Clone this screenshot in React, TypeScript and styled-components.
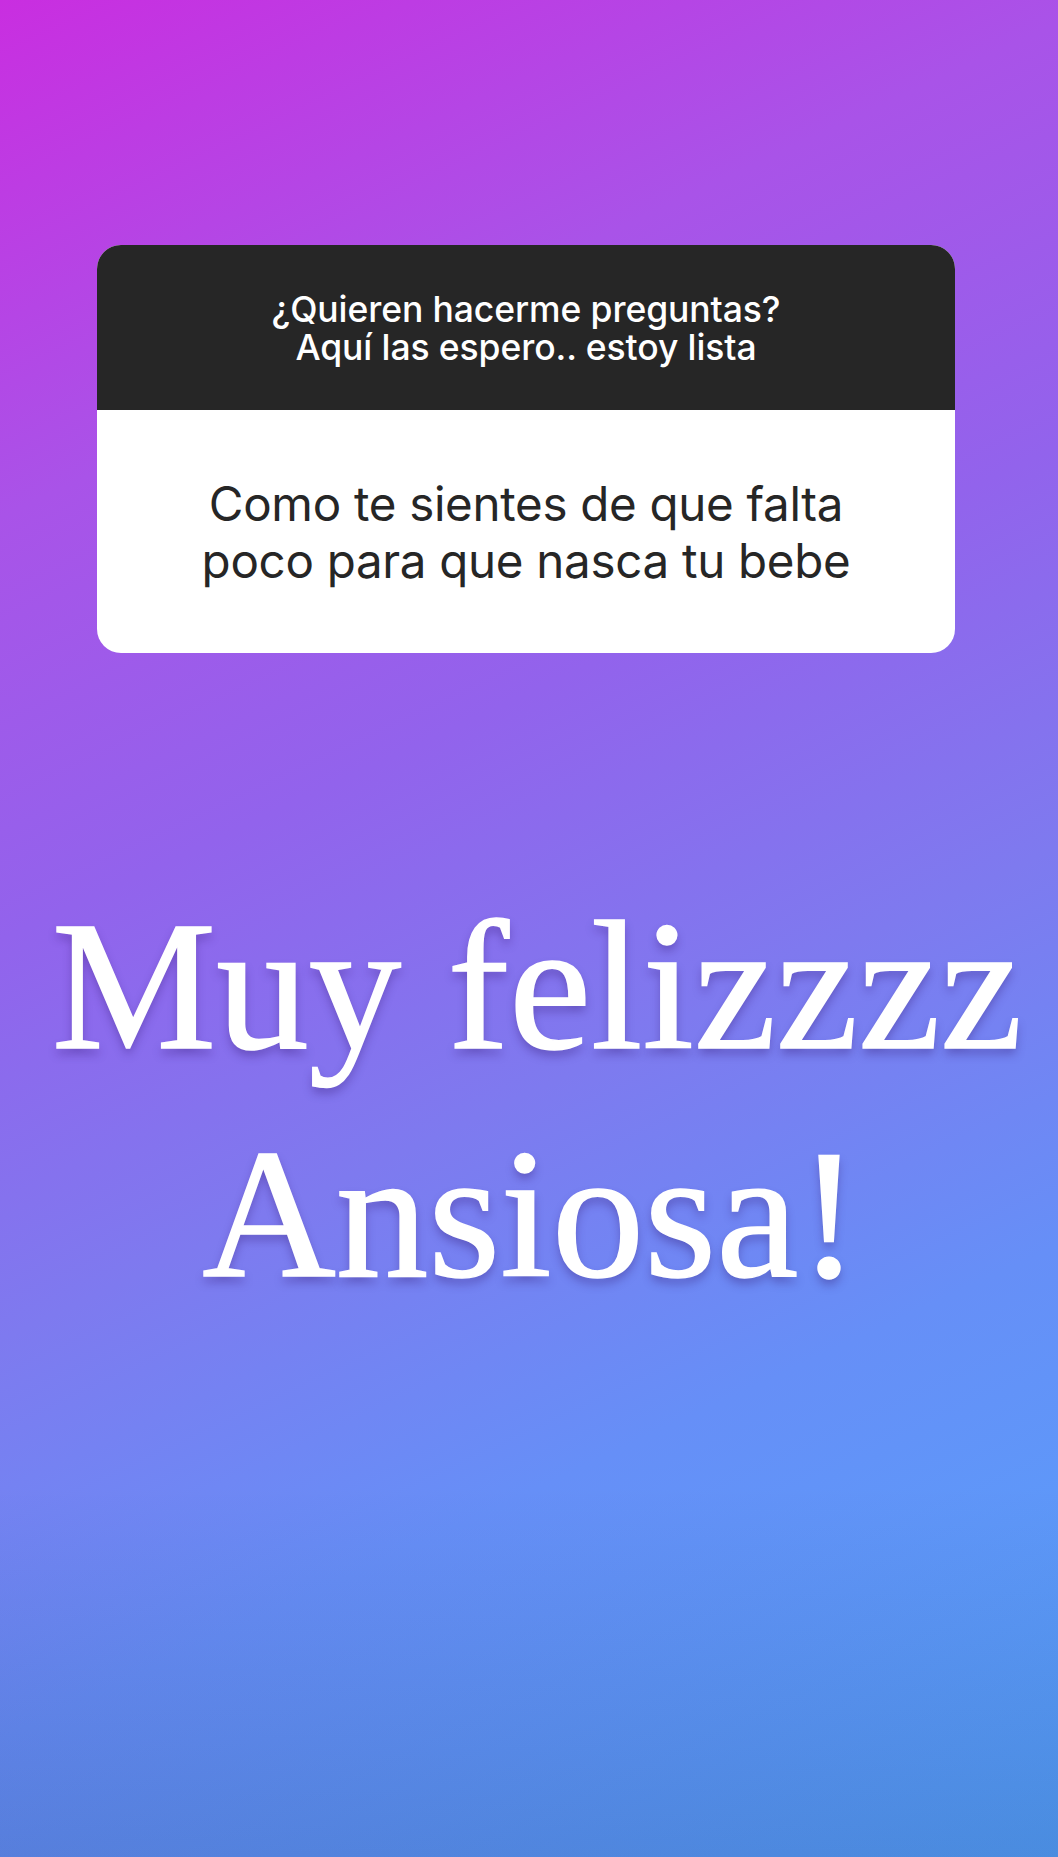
import React from "react";
import styled, { createGlobalStyle } from "styled-components";

const Global = createGlobalStyle`
  html, body { margin: 0; padding: 0; }
  body { width: 1058px; height: 1857px; overflow: hidden; }
`;

const Story = styled.div`
  position: relative;
  width: 1058px;
  height: 1857px;
  display: flex;
  flex-direction: column;
  align-items: center;
  background:
    linear-gradient(180deg, rgba(20, 10, 60, 0) 80%, rgba(20, 10, 60, 0.15) 100%),
    linear-gradient(155deg, #c92ee0 0%, #a953e8 22%, #9263ec 40%, #7e7aef 57%, #668ff7 74%, #53a3fc 100%);
`;

const Card = styled.div`
  margin-top: 245px;
  align-self: flex-start;
  margin-left: 97px;
  width: 858px;
  border-radius: 24px;
  overflow: hidden;
  display: flex;
  flex-direction: column;
  background: #ffffff;
`;

const Prompt = styled.div`
  height: 165px;
  background: #262626;
  color: #ffffff;
  display: flex;
  align-items: center;
  justify-content: center;
  text-align: center;
  font-family: Inter, Roboto, "Liberation Sans", sans-serif;
  font-weight: 500;
  font-size: 35.5px;
  line-height: 38px;
  letter-spacing: -0.1px;
  padding-top: 2px;
  box-sizing: border-box;
`;

const Question = styled.div`
  height: 243px;
  display: flex;
  align-items: center;
  justify-content: center;
  text-align: center;
  color: #262626;
  font-family: Inter, Roboto, "Liberation Sans", sans-serif;
  font-weight: 400;
  font-size: 47.5px;
  line-height: 57px;
  letter-spacing: -0.3px;
  box-sizing: border-box;
`;

const Answer = styled.div`
  margin-top: 219px;
  display: flex;
  flex-direction: column;
  align-items: center;
`;

const AnswerLine = styled.div<{ $shift: number }>`
  padding-left: ${(p) => p.$shift}px;
  color: #ffffff;
  font-family: "Liberation Serif", "DejaVu Serif", serif;
  font-size: 185px;
  line-height: 228px;
  -webkit-text-stroke: 1.5px #ffffff;
  text-shadow: 0 6px 10px rgba(50, 20, 110, 0.35);
  white-space: nowrap;
`;

export default function App() {
  return (
    <>
      <Global />
      <Story>
        <Card>
          <Prompt>
            ¿Quieren hacerme preguntas?
            <br />
            Aquí las espero.. estoy lista
          </Prompt>
          <Question>
            Como te sientes de que falta
            <br />
            poco para que nasca tu bebe
          </Question>
        </Card>
        <Answer>
          <AnswerLine $shift={16}>Muy felizzzz</AnswerLine>
          <AnswerLine $shift={4}>Ansiosa!</AnswerLine>
        </Answer>
      </Story>
    </>
  );
}
